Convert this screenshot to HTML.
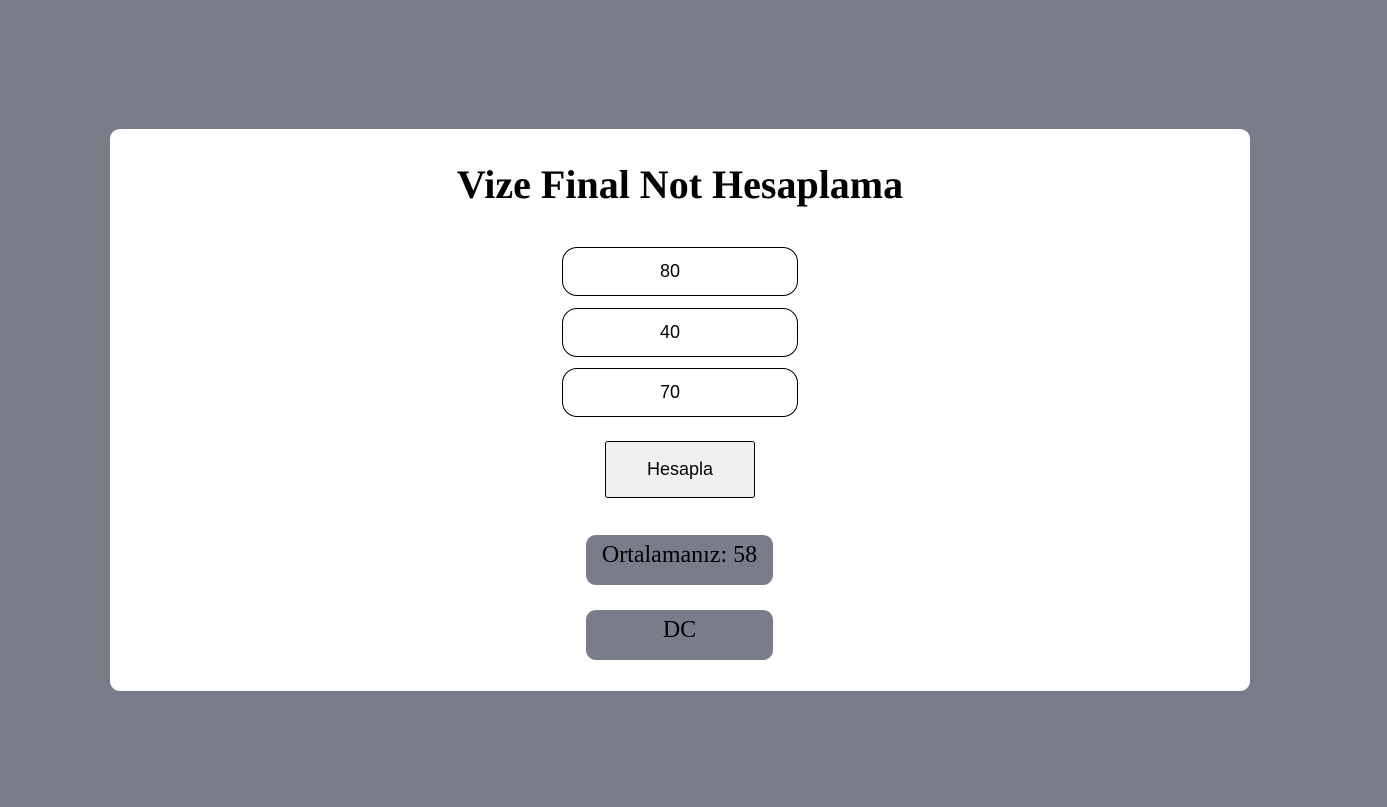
<!DOCTYPE html>
<html><head><style>
body{margin:0;width:1387px;height:807px;background:#787d89;position:relative;overflow:hidden;font-family:"Liberation Serif",serif}
.card{position:absolute;left:110px;top:129px;width:1140px;height:562px;background:#fff;border-radius:10px}
h1{position:absolute;left:0;width:1360px;top:162px;margin:0;text-align:center;font-size:40px;font-weight:bold;line-height:46px}
.in{position:absolute;left:562px;width:214px;padding-right:20px;height:47px;border:1px solid #000;border-radius:15px;box-sizing:content-box;font-family:"Liberation Sans",sans-serif;font-size:18px;text-align:center;line-height:47px;background:#fff}
.btn{position:absolute;left:605px;top:441px;width:148px;height:55px;border:1px solid #000;border-radius:3px;background:#f0f0f0;font-family:"Liberation Sans",sans-serif;font-size:18px;text-align:center;line-height:55px}
.res{position:absolute;left:586px;width:187px;height:50px;background:#787d89;border-radius:10px;text-align:center;font-size:24px;line-height:40px}
</style></head><body>
<div class="card"></div>
<h1>Vize Final Not Hesaplama</h1>
<div class="in" style="top:247px">80</div>
<div class="in" style="top:308px">40</div>
<div class="in" style="top:368px">70</div>
<div class="btn">Hesapla</div>
<div class="res" style="top:535px">Ortalamanız: 58</div>
<div class="res" style="top:610px">DC</div>
</body></html>
